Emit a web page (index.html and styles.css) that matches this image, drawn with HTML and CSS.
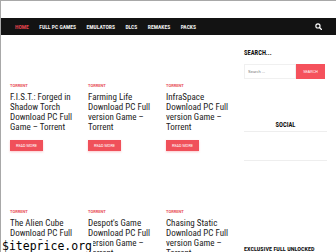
FILE: index.html
```html
<!DOCTYPE html>
<html lang="en">
<head>
    <meta charset="UTF-8">
    <meta name="viewport" content="width=device-width, initial-scale=1.0">
    <title>Full PC Games</title>
    <link rel="stylesheet" href="styles.css">
</head>
<body>
    <div class="top"></div>
    <nav class="menu">
        <a href="#" class="active">Home</a>
        <a href="#">Full PC Games</a>
        <a href="#">Emulators</a>
        <a href="#">DLCs</a>
        <a href="#">Remakes</a>
        <a href="#">Packs</a>
        <svg class="search-icon" width="7" height="7" viewBox="0 0 10 10">
            <circle cx="4.2" cy="4.2" r="3" fill="none" stroke="#fff" stroke-width="1.6"/>
            <line x1="6.4" y1="6.4" x2="9.2" y2="9.2" stroke="#fff" stroke-width="1.8" stroke-linecap="round"/>
        </svg>
    </nav>

    <div class="wrap">
        <div class="posts">
            <div class="card">
                <div class="thumb"></div>
                <span class="cat">Torrent</span>
                <h3>F.I.S.T.: Forged in Shadow Torch Download PC Full Game – Torrent</h3>
                <a href="#" class="more">Read More</a>
            </div>
            <div class="card">
                <div class="thumb"></div>
                <span class="cat">Torrent</span>
                <h3>Farming Life Download PC Full version Game – Torrent</h3>
                <a href="#" class="more">Read More</a>
            </div>
            <div class="card">
                <div class="thumb"></div>
                <span class="cat">Torrent</span>
                <h3>InfraSpace Download PC Full version Game – Torrent</h3>
                <a href="#" class="more">Read More</a>
            </div>
            <div class="card">
                <div class="thumb"></div>
                <span class="cat">Torrent</span>
                <h3>The Alien Cube Download PC Full version Game – Torrent</h3>
                <a href="#" class="more">Read More</a>
            </div>
            <div class="card">
                <div class="thumb"></div>
                <span class="cat">Torrent</span>
                <h3>Despot's Game Download PC Full version Game – Torrent</h3>
                <a href="#" class="more">Read More</a>
            </div>
            <div class="card">
                <div class="thumb"></div>
                <span class="cat">Torrent</span>
                <h3>Chasing Static Download PC Full version Game – Torrent</h3>
                <a href="#" class="more">Read More</a>
            </div>
        </div>

        <aside class="sidebar">
            <h4 class="widget-title">Search...</h4>
            <form class="search-form">
                <input type="text" placeholder="Search ...">
                <button type="submit">Search</button>
            </form>
            <h4 class="widget-title center">Social</h4>
            <div class="social"></div>
            <h4 class="widget-title exclusive">Exclusive Full Unlocked</h4>
        </aside>
    </div>

    <div class="watermark">$iteprice.org</div>
</body>
</html>
```

FILE: styles.css
```css
body {
    margin: 0;
    padding: 0;
    background-color: #fff;
    border-top: 1px solid #a8a8a8;
    border-left: 1px solid #a8a8a8;
    font-family: Roboto, "Liberation Sans", sans-serif;
    overflow: hidden;
    height: 251px;
    position: relative;
}
.top {
    height: 17px;
}
.menu {
    height: 17px;
    background-color: #131313;
    display: flex;
    align-items: center;
    padding-left: 14px;
    gap: 10.5px;
}
.menu a {
    color: #eee;
    text-decoration: none;
    text-transform: uppercase;
    font-family: "Liberation Sans Narrow", "Roboto Condensed", Roboto, sans-serif;
    font-weight: bold;
    font-size: 5.6px;
}
.menu a.active {
    color: #e0424c;
}
.search-icon {
    margin-left: auto;
    margin-right: 14px;
}
.wrap {
    display: flex;
    padding: 4px 0 0 9px;
}
.posts {
    display: grid;
    grid-template-columns: repeat(3, 68px);
    column-gap: 10px;
    row-gap: 14px;
    width: 234px;
}
.thumb {
    height: 44px;
}
.cat {
    display: block;
    height: 6px;
    line-height: 6px;
    font-size: 4px;
    font-weight: bold;
    color: #e8505b;
    text-transform: uppercase;
    margin-bottom: 3px;
}
.card h3 {
    margin: 0;
    font-family: "Liberation Sans Narrow", "Roboto Condensed", Roboto, sans-serif;
    font-weight: normal;
    font-size: 9px;
    line-height: 10px;
    color: #222;
}
.more {
    display: inline-block;
    margin-top: 8px;
    width: 33px;
    height: 11px;
    line-height: 11px;
    background-color: #f0505a;
    color: #fff;
    font-size: 3.8px;
    text-align: center;
    text-transform: uppercase;
    text-decoration: none;
    box-shadow: 0 1px 2px rgba(240, 80, 90, 0.3);
}
.sidebar {
    width: 83px;
    padding-top: 10px;
}
.widget-title {
    margin: 0;
    font-family: "Liberation Sans Narrow", "Roboto Condensed", Roboto, sans-serif;
    font-size: 6.5px;
    font-weight: bold;
    color: #111;
    text-transform: uppercase;
    line-height: 8px;
}
.search-form {
    display: flex;
    margin-top: 7px;
    height: 15px;
}
.search-form input {
    width: 52px;
    box-sizing: border-box;
    border: 1px solid #f0f0f0;
    padding: 0 3px;
    font-size: 4px;
    color: #999;
    outline: none;
}
.search-form button {
    width: 29px;
    border: none;
    padding: 0;
    background-color: #f5515c;
    color: #fff;
    font-size: 3.5px;
    text-transform: uppercase;
}
.widget-title.center {
    text-align: center;
    margin-top: 42px;
    padding-bottom: 2px;
    border-bottom: 1px solid #eee;
}
.social {
    height: 28px;
    border-bottom: 1px solid #eee;
}
.widget-title.exclusive {
    margin-top: 84px;
    font-size: 6.2px;
}
.watermark {
    position: absolute;
    left: 0;
    bottom: 0;
    background-color: #fff;
    color: #000;
    font-family: "DejaVu Sans Mono", monospace;
    font-size: 11.5px;
    line-height: 12px;
    padding: 0 1px;
}
```
